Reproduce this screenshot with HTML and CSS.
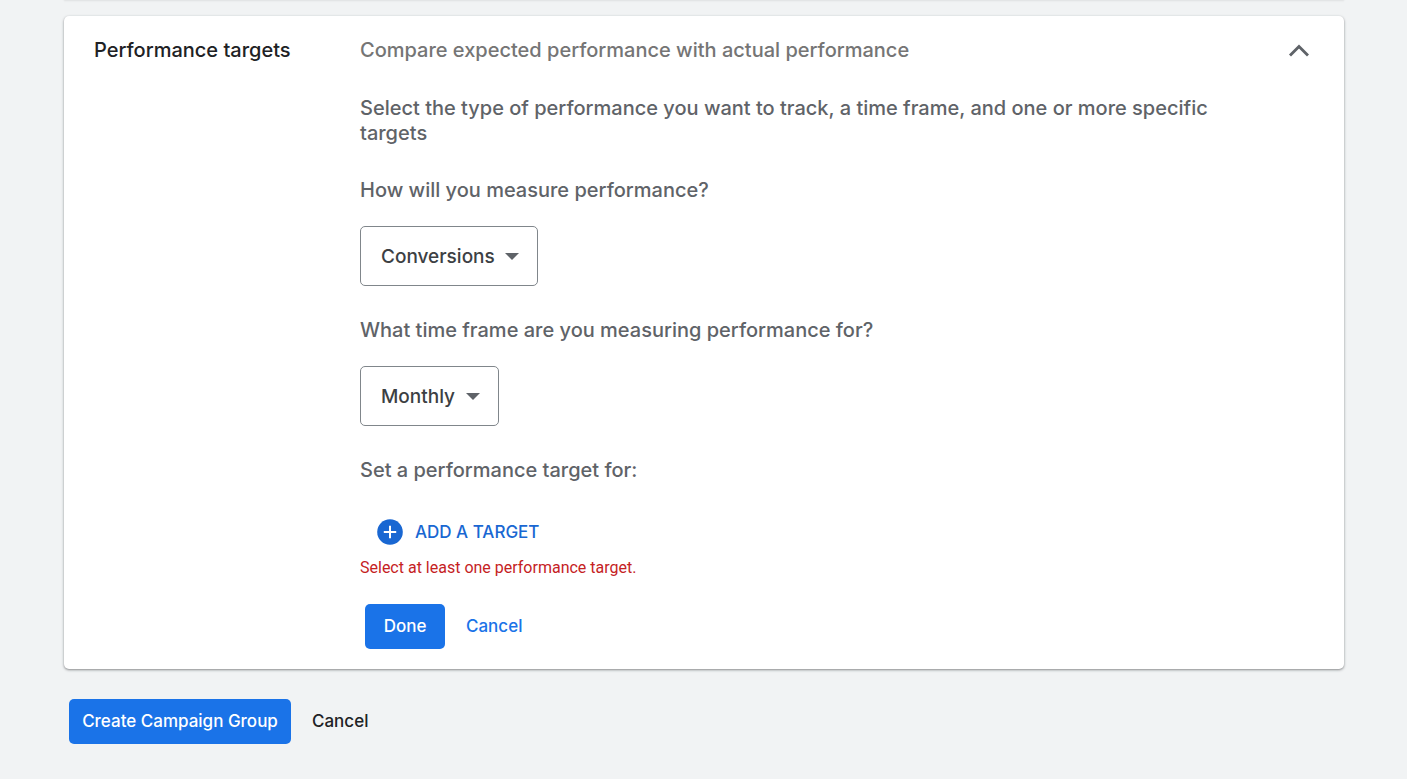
FILE: index.html
```html
<!DOCTYPE html>
<html lang="en">
<head>
<meta charset="utf-8">
<meta name="viewport" content="width=device-width, initial-scale=1">
<title>Create campaign group</title>
<link rel="stylesheet" href="styles.css">
</head>
<body>
<main class="page">
  <div class="previous-card"></div>
  <section class="card">
    <h2 class="card-title">Performance targets</h2>
    <form class="card-body">
      <p class="summary">Compare expected performance with actual performance</p>
      <p class="intro">Select the type of performance you want to track, a time frame, and one or more specific targets</p>
      <label class="question" for="metric">How will you measure performance?</label>
      <div class="dropdown">
        <select class="dropdown-select" id="metric"><option>Conversions</option></select>
        <svg class="dropdown-arrow" width="14" height="7" viewBox="0 0 14 7" aria-hidden="true"><path d="M0 0h14L7 7z" fill="#5f6368"/></svg>
      </div>
      <label class="question" for="period">What time frame are you measuring performance for?</label>
      <div class="dropdown">
        <select class="dropdown-select" id="period"><option>Monthly</option></select>
        <svg class="dropdown-arrow" width="14" height="7" viewBox="0 0 14 7" aria-hidden="true"><path d="M0 0h14L7 7z" fill="#5f6368"/></svg>
      </div>
      <p class="question">Set a performance target for:</p>
      <button class="add-target" type="button">
        <svg width="26" height="26" viewBox="0 0 26 26" aria-hidden="true"><circle cx="13" cy="13" r="12.8" fill="#1967d2"/><path d="M13 6.8v12.4M6.8 13h12.4" stroke="#fff" stroke-width="2"/></svg>
        <span>ADD A TARGET</span>
      </button>
      <p class="error">Select at least one performance target.</p>
      <div class="actions">
        <button class="button button-primary" type="button">Done</button>
        <button class="button button-link" type="button">Cancel</button>
      </div>
    </form>
    <button class="collapse" type="button" aria-label="Collapse">
      <svg width="22" height="14" viewBox="0 0 22 14" aria-hidden="true"><path d="M2 12.6 11 3.4l9 9.2" fill="none" stroke="#5f6368" stroke-width="2.8"/></svg>
    </button>
  </section>
  <div class="page-actions">
    <button class="button button-primary button-create" type="button">Create Campaign Group</button>
    <button class="button button-plain" type="button">Cancel</button>
  </div>
</main>
</body>
</html>
```
FILE: styles.css
```css
* {
  box-sizing: border-box;
}

body {
  margin: 0;
  background: #f1f3f4;
  color: #202124;
  font-family: Inter, "Open Sans", sans-serif;
  font-size: 20px;
  font-weight: 500;
  line-height: 25px;
}

h2,
p {
  margin: 0;
  font-size: inherit;
  font-weight: inherit;
}

button,
select {
  font: inherit;
  cursor: pointer;
}

.page {
  padding: 0 63px 30px 64px;
}

.previous-card {
  height: 4px;
  margin-top: -4px;
  background: #fff;
  box-shadow: 0 1px 2px rgba(60, 64, 67, 0.1);
}

.card {
  display: grid;
  grid-template-columns: 236px minmax(0, 1fr) auto;
  gap: 30px;
  align-items: start;
  margin-top: 16px;
  padding: 22px 30px 20px;
  border-radius: 5px;
  background: #fff;
  box-shadow: 0 1px 3px rgba(60, 64, 67, 0.35), 0 1px 2px rgba(60, 64, 67, 0.3);
}

.card-body {
  display: flex;
  flex-direction: column;
  align-items: flex-start;
  padding-right: 24px;
  color: #5f6368;
}

.summary {
  color: #757575;
}

.intro {
  margin-top: 33px;
}

.question {
  margin-top: 32px;
}

.dropdown {
  position: relative;
  margin-top: 23px;
}

.dropdown-select {
  display: block;
  height: 60px;
  padding: 0 42px 0 20px;
  border: 1px solid #80868b;
  border-radius: 5px;
  background: #fff;
  color: #3c4043;
  font-size: 19px;
  appearance: none;
}

.dropdown-arrow {
  position: absolute;
  top: 27px;
  right: 19px;
  pointer-events: none;
}

.add-target {
  display: flex;
  align-items: center;
  gap: 12px;
  margin: 31px 0 0 17px;
  padding: 5px 0;
  border: 0;
  background: none;
  color: #1967d2;
  font-size: 17px;
}

.error {
  margin-top: 8px;
  color: #c5221f;
  font-family: Roboto, sans-serif;
  font-size: 16px;
  font-weight: 400;
  line-height: 20px;
}

.actions,
.page-actions {
  display: flex;
  gap: 10px;
  padding-left: 5px;
}

.actions {
  margin-top: 26px;
}

.page-actions {
  margin-top: 30px;
}

.button {
  height: 45px;
  padding: 0 11px;
  border: 0;
  border-radius: 5px;
  background: none;
  font-size: 17px;
}

.button-primary {
  min-width: 80px;
  background: #1a73e8;
  color: #fff;
}

.button-link {
  color: #1a73e8;
}

.button-plain {
  color: #202124;
}

.button-create {
  min-width: 222px;
}

.collapse {
  margin-right: 4px;
  padding: 5px 0;
  border: 0;
  background: none;
  line-height: 0;
}
```
